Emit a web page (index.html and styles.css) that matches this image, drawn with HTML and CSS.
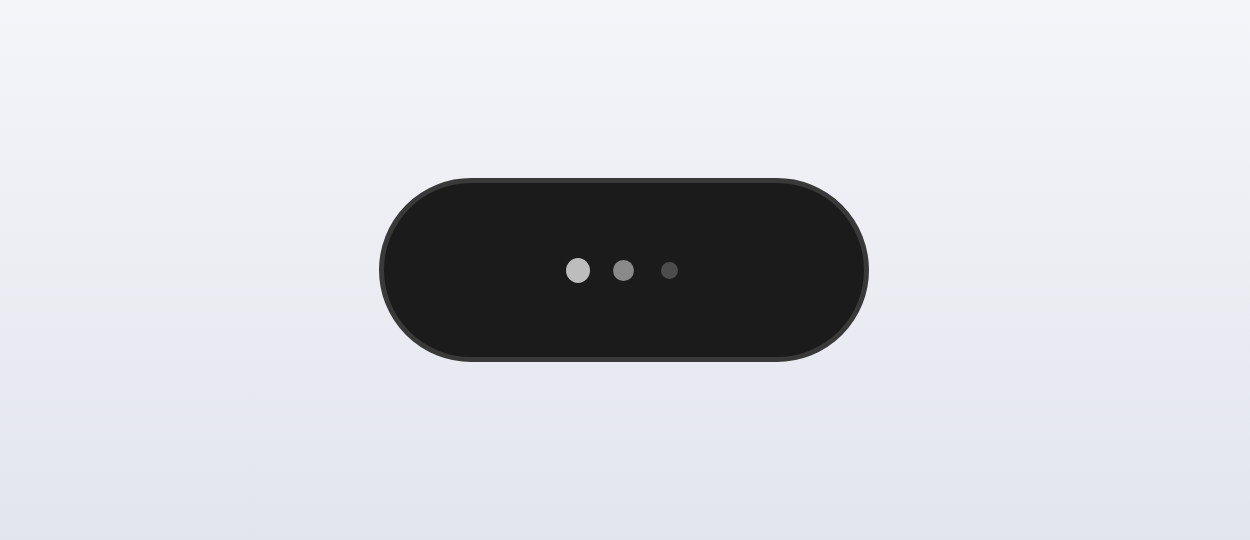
FILE: index.html
```html
<!DOCTYPE html>
<html lang="en">
<head>
<meta charset="utf-8">
<title>Loading</title>
<link rel="stylesheet" href="styles.css">
</head>
<body>
<main class="stage">
  <div class="pill" role="status" aria-label="Loading">
    <div class="dots">
      <span class="slot"><span class="dot dot-1"></span></span>
      <span class="slot"><span class="dot dot-2"></span></span>
      <span class="slot"><span class="dot dot-3"></span></span>
    </div>
  </div>
</main>
</body>
</html>
```
FILE: styles.css
```css
html, body {
  margin: 0;
  padding: 0;
  height: 100%;
}
body {
  font-family: "Liberation Sans", Arial, sans-serif;
  background: linear-gradient(180deg, #f4f5f9 0%, #e3e5ed 100%);
}
.stage {
  height: 540px;
  display: flex;
  align-items: center;
  justify-content: center;
}
.pill {
  box-sizing: border-box;
  width: 490px;
  height: 184px;
  margin-right: 2px;
  border: 5px solid #393939;
  border-radius: 92px;
  background: #1b1b1b;
  display: flex;
  align-items: center;
  justify-content: center;
}
.dots {
  display: flex;
  align-items: center;
  gap: 22px;
  margin-left: -1px;
}
.slot {
  width: 24px;
  height: 24px;
  display: flex;
  align-items: center;
  justify-content: center;
}
.dot {
  display: block;
  border-radius: 50%;
}
.dot-1 {
  width: 25px;
  height: 25px;
  background: #bdbdbd;
}
.dot-2 {
  width: 21px;
  height: 21px;
  background: #8a8a8a;
}
.dot-3 {
  width: 17px;
  height: 17px;
  background: #4c4c4c;
}
```
